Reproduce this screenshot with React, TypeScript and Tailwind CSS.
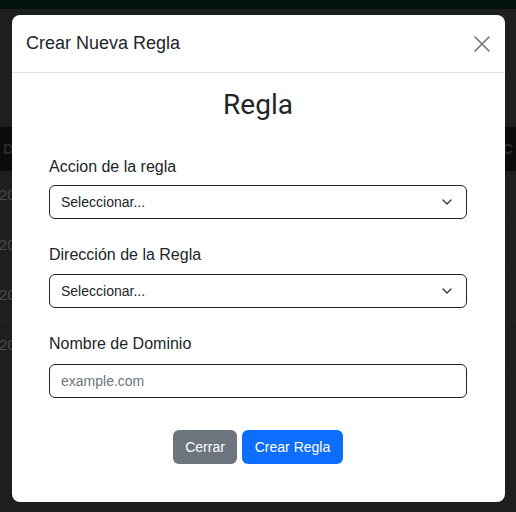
function Chevron() {
  return (
    <svg width="10" height="6" viewBox="0 0 10 6" fill="none" className="shrink-0">
      <path d="M1 1 5 5 9 1" stroke="#343a40" strokeWidth="1.4" strokeLinecap="round" strokeLinejoin="round" />
    </svg>
  );
}

function SelectBox() {
  return (
    <div className="flex h-[34px] items-center justify-between rounded-[6px] border border-[#212529] bg-white pl-[11px] pr-[14px] text-[14px] text-[#212529]">
      <span>Seleccionar...</span>
      <Chevron />
    </div>
  );
}

export default function App() {
  const rows = ["2025", "2025", "2025", "2025"];

  return (
    <div className="relative h-[512px] w-full overflow-hidden bg-[#1e1e1e] font-['Liberation_Sans',Arial,sans-serif]">
      {/* page behind the backdrop */}
      <div className="h-[9px] bg-[#03140c]" />
      <div className="mt-[118px]">
        <div className="flex h-[44px] items-center justify-between bg-[#0b0b0b] px-[3px] text-[15px] font-bold text-[#2b2b2b]">
          <span>D</span>
          <span>C</span>
        </div>
        {rows.map((r, i) => (
          <div key={i} className="flex h-[50px] items-center border-b border-[#232323] text-[15px] text-[#4a4a4a]">
            <span className="-ml-[1px]">{r}</span>
          </div>
        ))}
      </div>

      {/* modal */}
      <div className="absolute left-[12px] top-[15px] h-[487px] w-[493px] overflow-hidden rounded-[8px] bg-white">
        <div className="flex h-[58px] items-center justify-between border-b border-[#dee2e6] pl-[14px] pr-[15px]">
          <h5 className="text-[18px] leading-[27px] text-[#212529]">Crear Nueva Regla</h5>
          <svg width="16" height="16" viewBox="0 0 16 16" fill="none">
            <path d="M1 1 15 15M15 1 1 15" stroke="#6c757d" strokeWidth="1.6" strokeLinecap="round" />
          </svg>
        </div>

        <div className="pl-[37px] pr-[38px] pt-[15px]">
          <h2 className="text-center font-['Roboto',sans-serif] text-[28px] leading-[34px] text-[#212529]">Regla</h2>

          <div className="mt-[33px]">
            <label className="block text-[16px] leading-6 text-[#212529]">Accion de la regla</label>
            <div className="mt-[6px]">
              <SelectBox />
            </div>
          </div>

          <div className="mt-[24px]">
            <label className="block text-[16px] leading-6 text-[#212529]">Dirección de la Regla</label>
            <div className="mt-[7px]">
              <SelectBox />
            </div>
          </div>

          <div className="mt-[24px]">
            <label className="block text-[16px] leading-6 text-[#212529]">Nombre de Dominio</label>
            <input
              type="text"
              placeholder="example.com"
              className="mt-[8px] block h-[34px] w-full rounded-[6px] border border-[#212529] bg-white px-[11px] text-[14px] text-[#212529] outline-none placeholder:text-[#6c757d]"
            />
          </div>

          <div className="mt-[32px] flex justify-center gap-[5px]">
            <button className="h-[34px] w-[64px] rounded-[6px] bg-[#6c757d] text-[14px] text-white">Cerrar</button>
            <button className="h-[34px] w-[101px] rounded-[6px] bg-[#0d6efd] text-[14px] text-white">Crear Regla</button>
          </div>
        </div>
      </div>
    </div>
  );
}
